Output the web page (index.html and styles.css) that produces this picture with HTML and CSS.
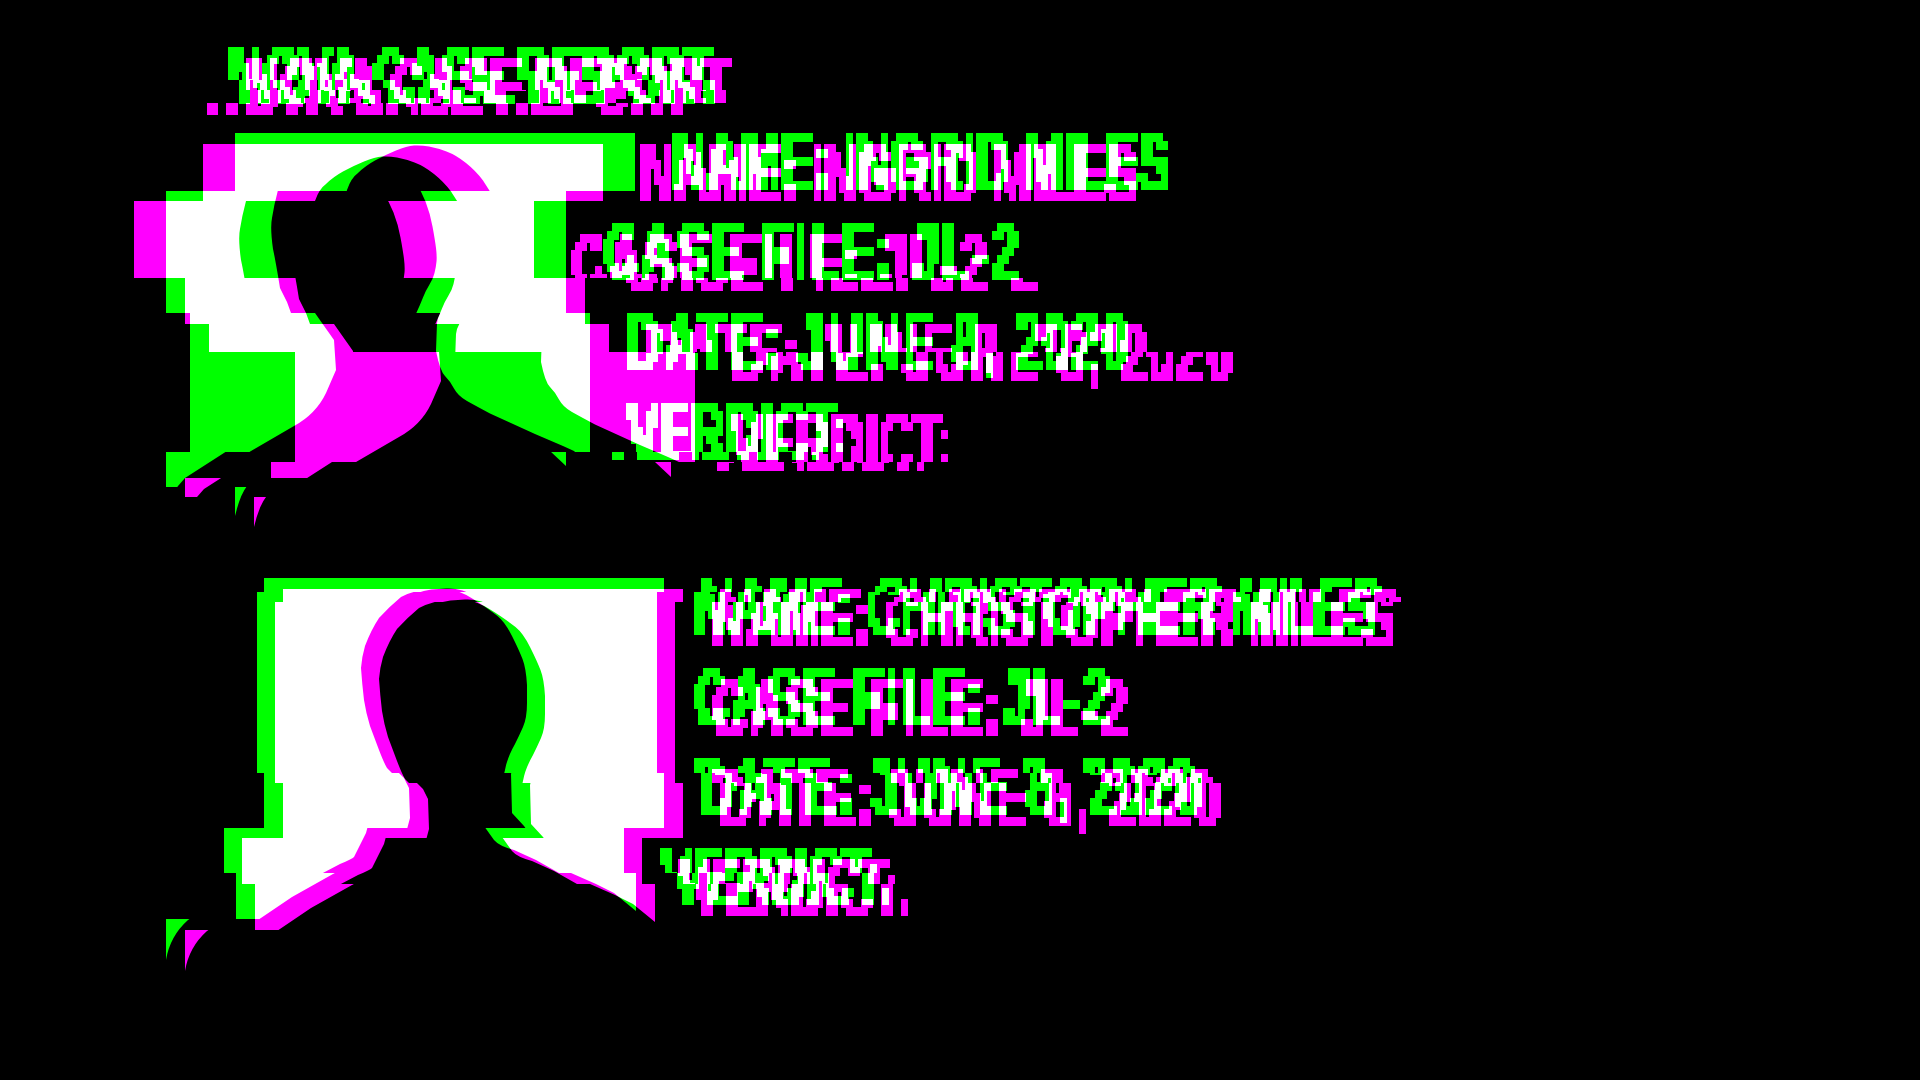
FILE: index.html
```html
<!DOCTYPE html>
<html lang="en">
<head>
<meta charset="utf-8">
<title>Nova Case Report</title>
<link rel="stylesheet" href="styles.css">
</head>
<body>
<svg class="defs" width="0" height="0" aria-hidden="true">
  <filter id="pixel" x="0" y="0" width="100%" height="100%" color-interpolation-filters="sRGB">
    <feFlood x="2" y="4" width="1" height="1" flood-color="#fff"/>
    <feComposite width="5" height="8"/>
    <feTile result="grid"/>
    <feComposite in="SourceGraphic" in2="grid" operator="in"/>
    <feMorphology operator="dilate" radius="3 4"/>
    <feComponentTransfer>
      <feFuncA type="discrete" tableValues="0 1 1 1"/>
    </feComponentTransfer>
  </filter>
  <filter id="glitch" filterUnits="userSpaceOnUse" primitiveUnits="userSpaceOnUse" x="0" y="0" width="1920" height="1080" color-interpolation-filters="sRGB">
    <feOffset in="SourceGraphic" dx="0" dy="0" x="0" y="0" width="1920" height="80" result="g1"/>
    <feOffset in="SourceGraphic" dx="11" dy="0" x="0" y="80" width="1920" height="30" result="g2"/>
    <feOffset in="SourceGraphic" dx="0" dy="0" x="0" y="110" width="1920" height="81" result="g3"/>
    <feOffset in="SourceGraphic" dx="-69.2" dy="0" x="0" y="191" width="1920" height="122" result="g4"/>
    <feOffset in="SourceGraphic" dx="-45" dy="0" x="0" y="313" width="1920" height="139" result="g5"/>
    <feOffset in="SourceGraphic" dx="-69.2" dy="0" x="0" y="452" width="1920" height="35" result="g6"/>
    <feOffset in="SourceGraphic" dx="0" dy="0" x="0" y="487" width="1920" height="105" result="g7"/>
    <feOffset in="SourceGraphic" dx="-7.2" dy="0" x="0" y="592" width="1920" height="181" result="g8"/>
    <feOffset in="SourceGraphic" dx="0" dy="0" x="0" y="773" width="1920" height="55" result="g9"/>
    <feOffset in="SourceGraphic" dx="-40.4" dy="0" x="0" y="828" width="1920" height="45" result="g10"/>
    <feOffset in="SourceGraphic" dx="-28" dy="0" x="0" y="873" width="1920" height="46" result="g11"/>
    <feOffset in="SourceGraphic" dx="-98" dy="0" x="0" y="919" width="1920" height="161" result="g12"/>
    <feMerge result="gm">
      <feMergeNode in="g1"/><feMergeNode in="g2"/><feMergeNode in="g3"/><feMergeNode in="g4"/>
      <feMergeNode in="g5"/><feMergeNode in="g6"/><feMergeNode in="g7"/><feMergeNode in="g8"/>
      <feMergeNode in="g9"/><feMergeNode in="g10"/><feMergeNode in="g11"/><feMergeNode in="g12"/>
    </feMerge>
    <feColorMatrix in="gm" type="matrix" values="0 0 0 0 0  0 1 0 0 0  0 0 0 0 0  0 0 0 1 0" result="green"/>
    <feOffset in="SourceGraphic" dx="18" dy="10.5" x="0" y="0" width="1920" height="90" result="m1"/>
    <feOffset in="SourceGraphic" dx="22" dy="10.5" x="0" y="90" width="1920" height="13" result="m2"/>
    <feOffset in="SourceGraphic" dx="-21" dy="10.5" x="0" y="103" width="1920" height="41" result="m3"/>
    <feOffset in="SourceGraphic" dx="-31.7" dy="10.5" x="0" y="144" width="1920" height="57" result="m4"/>
    <feOffset in="SourceGraphic" dx="-101" dy="10.5" x="0" y="201" width="1920" height="77" result="m5"/>
    <feOffset in="SourceGraphic" dx="-50" dy="10.5" x="0" y="278" width="1920" height="46" result="m6"/>
    <feOffset in="SourceGraphic" dx="-25.7" dy="10.5" x="0" y="324" width="1920" height="28" result="m7"/>
    <feOffset in="SourceGraphic" dx="59.7" dy="10.5" x="0" y="352" width="1920" height="110" result="m8"/>
    <feOffset in="SourceGraphic" dx="36" dy="10.5" x="0" y="462" width="1920" height="16" result="m9"/>
    <feOffset in="SourceGraphic" dx="-50" dy="10.5" x="0" y="478" width="1920" height="19" result="m10"/>
    <feOffset in="SourceGraphic" dx="19.3" dy="10.5" x="0" y="497" width="1920" height="105" result="m11"/>
    <feOffset in="SourceGraphic" dx="11.4" dy="10.5" x="0" y="602" width="1920" height="181" result="m12"/>
    <feOffset in="SourceGraphic" dx="19.3" dy="10.5" x="0" y="783" width="1920" height="55" result="m13"/>
    <feOffset in="SourceGraphic" dx="-21.6" dy="10.5" x="0" y="838" width="1920" height="46" result="m14"/>
    <feOffset in="SourceGraphic" dx="-9.3" dy="10.5" x="0" y="884" width="1920" height="46" result="m15"/>
    <feOffset in="SourceGraphic" dx="-79" dy="10.5" x="0" y="930" width="1920" height="150" result="m16"/>
    <feMerge result="mm">
      <feMergeNode in="m1"/><feMergeNode in="m2"/><feMergeNode in="m3"/><feMergeNode in="m4"/>
      <feMergeNode in="m5"/><feMergeNode in="m6"/><feMergeNode in="m7"/><feMergeNode in="m8"/>
      <feMergeNode in="m9"/><feMergeNode in="m10"/><feMergeNode in="m11"/><feMergeNode in="m12"/>
      <feMergeNode in="m13"/><feMergeNode in="m14"/><feMergeNode in="m15"/><feMergeNode in="m16"/>
    </feMerge>
    <feColorMatrix in="mm" type="matrix" values="1 0 0 0 0  0 0 0 0 0  0 0 1 0 0  0 0 0 1 0" result="magenta"/>
    <feBlend in="green" in2="magenta" mode="screen"/>
  </filter>
</svg>

<main class="scene">
  <h1 class="line title"><span class="glyphs tight">NOVA CASE REPORT</span></h1>

  <section class="report first">
    <svg class="photo" viewBox="0 0 400 400" width="400" height="400" aria-label="Silhouette of Ingrid Miles">
      <rect width="400" height="400" fill="#fff"/>
      <path fill="#000" d="M179 12.5 Q186 12 194 13.5 Q202 15 211.5 18.5 Q221 22 231 30 Q241 38 248 47.5 Q255 57 259.5 68.5 Q264 80 266.5 93.5 Q269 107 270 115 Q271 123 270.5 128.5 Q270 134 268.5 140 Q267 146 263.5 151.5 Q260 157 257 164.5 Q254 172 251 178.5 L248 185 L247 190 L246 218 Q250 238 255 243 Q260 248 264 255.5 Q268 263 277 268 Q286 273 300 280.5 L345 301 L373 313 L384 318 L400 333 L400 400 L0 400 L0 383 Q5 362 12 353 L19 345 L61 318 L104 293 Q126 281 136 260 L146 237 L144 207 L132 190 L125 180 L121 169 L114 155 Q110 130 107 116 Q104 95 106 85 Q108 72 112 57 Q116 45 123 40 Q130 33 140 27.5 Q150 22 161 17.5 Q172 13 179 12.5 Z"/>
    </svg>
    <div class="info">
      <p class="line"><span class="glyphs">NAME: INGRID MILES</span></p>
      <p class="line"><span class="glyphs wide">CASE FILE: JL-2</span></p>
      <p class="line"><span class="glyphs wide">DATE: JUNE 8, 2020</span></p>
      <p class="line"><span class="glyphs">VERDICT:</span></p>
    </div>
  </section>

  <section class="report second">
    <svg class="photo" viewBox="0 0 400 400" width="400" height="400" aria-label="Silhouette of Christopher Miles">
      <rect width="400" height="400" fill="#fff"/>
      <path fill="#000" d="M182 10.5 Q190 10 198.5 12.5 Q207 15 220 23.5 Q233 32 240.5 38 Q248 44 255 58 Q262 72 265.5 81 Q269 90 270 107 L270 125 Q270 140 266 149 Q262 158 258 166 Q250 180 248 192 L247 196 L248 235 L260 248 L270 262 Q275 268 290 272 L312 282 L335 295 L360 306 L378 315 L400 333 L400 400 L0 400 L0 382 Q4 358 22 342 L56 319 L97 296 L116 286 Q128 281 130 279 L142 255 L146 240 L145 210 L140 200 L130 190 Q127 185 122 172 L113 148 Q109 135 107 122 Q105 105 104 90 Q105 78 108 68 Q114 52 122 40 Q133 28 144 19 Q160 11 175 11 L182 10.5 Z"/>
    </svg>
    <div class="info">
      <p class="line"><span class="glyphs medium">NAME: CHRISTOPHER MILES</span></p>
      <p class="line"><span class="glyphs wide">CASE FILE: JL-2</span></p>
      <p class="line"><span class="glyphs wide">DATE: JUNE 8, 2020</span></p>
      <p class="line"><span class="glyphs">VERDICT:</span></p>
    </div>
  </section>
</main>
</body>
</html>
```
FILE: styles.css
```css
html, body {
  margin: 0;
  background: #000;
}

.defs {
  display: block;
  height: 0;
  overflow: hidden;
}

.scene {
  box-sizing: border-box;
  width: 1920px;
  height: 1080px;
  padding: 47px 0 0;
  overflow: hidden;
  color: #fff;
  font-family: "Liberation Sans", Arial, sans-serif;
  font-weight: 700;
  filter: url(#glitch);
}

.line {
  display: flow-root;
  width: 760px;
  height: 90px;
  margin: 0;
  font-size: 48px;
  font-weight: 700;
  line-height: 48px;
  white-space: nowrap;
  filter: url(#pixel);
}

.glyphs {
  display: block;
  width: max-content;
  margin-top: -9px;
  -webkit-text-stroke: 1.2px #fff;
  transform: scaleY(1.6);
  transform-origin: left top;
}

.tight { letter-spacing: -0.5px; }
.medium { letter-spacing: 0.2px; }
.wide { letter-spacing: 2.6px; }

.title {
  height: 86px;
  margin-left: 228px;
}

.report {
  display: flex;
  gap: 37px;
  height: 400px;
}

.report.first {
  margin-left: 234.7px;
  margin-bottom: 44.7px;
}

.report.second {
  margin-left: 263.6px;
}

.photo {
  display: block;
  flex: none;
}

.info {
  display: flex;
  flex-direction: column;
}
```
